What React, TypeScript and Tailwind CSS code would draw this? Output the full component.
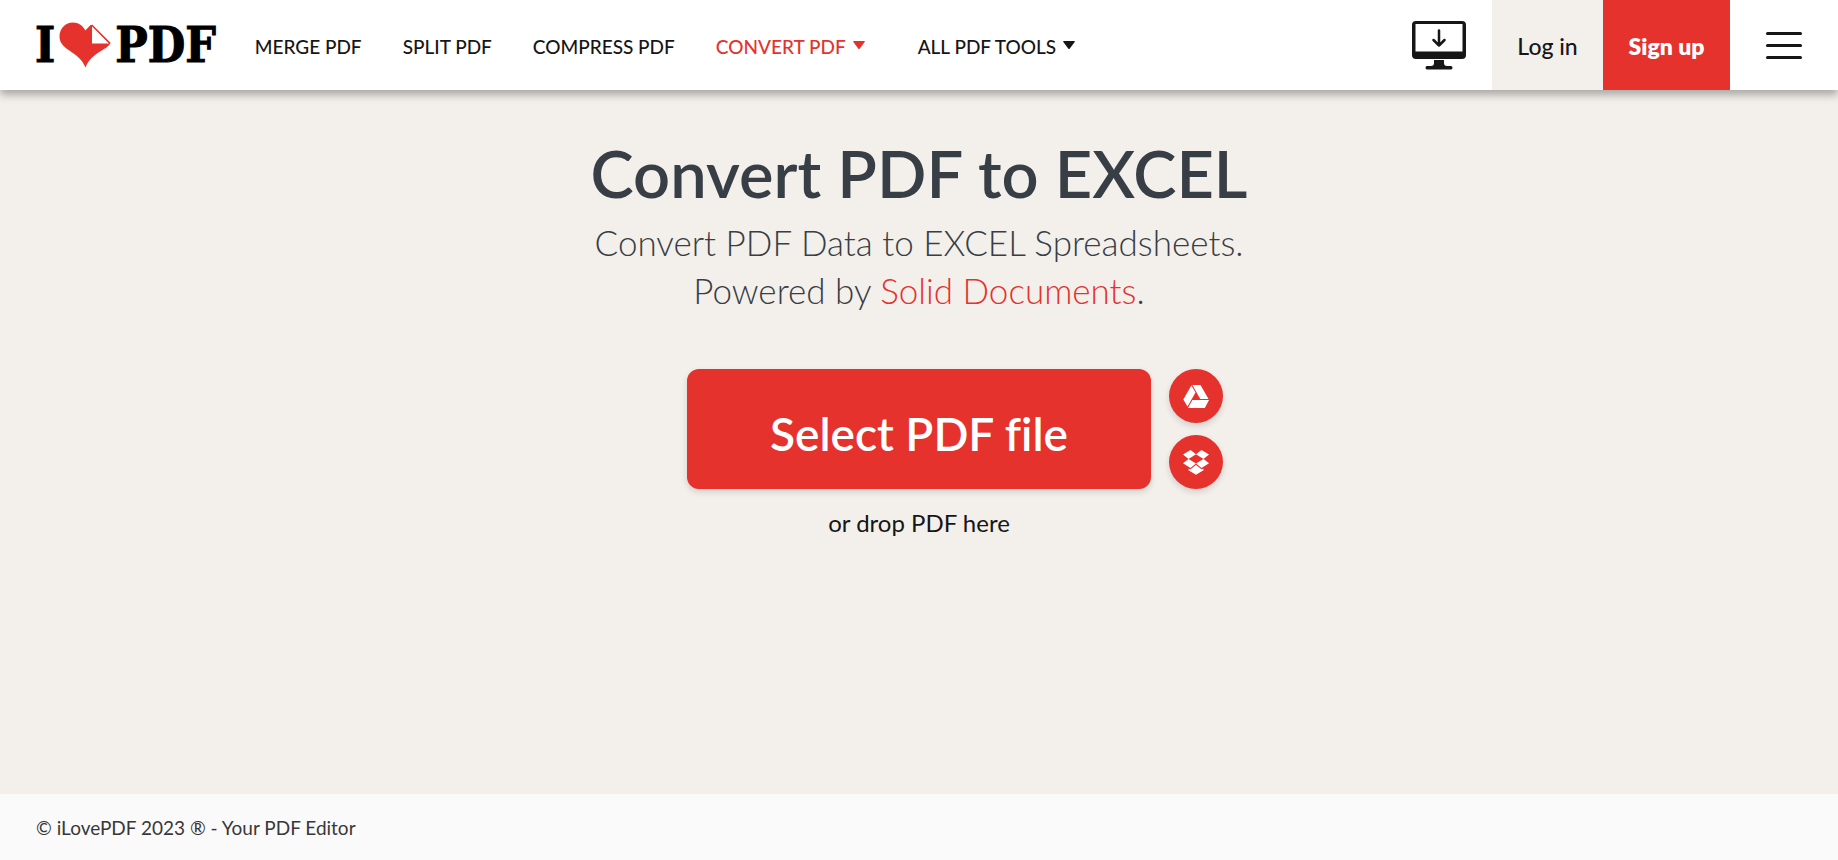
const navLink = "flex items-center gap-[7px] whitespace-nowrap text-[19px] font-medium";

function Caret() {
  return (
    <svg viewBox="0 0 12 8" className="mb-1 h-2 w-3" fill="currentColor" aria-hidden="true">
      <path d="M.8 0h10.400q1 .1.5 1L6.800 7.400q-.8 1-1.600 0L.3 1q-.5-.9.5-1z" />
    </svg>
  );
}

function Logo() {
  return (
    <a
      href="#"
      aria-label="iLovePDF"
      className="flex shrink-0 items-center font-['DejaVu_Serif_Condensed','DejaVu_Serif',serif] text-[48px] leading-none font-bold text-black [-webkit-text-stroke:1px_black]"
    >
      <span>I</span>
      <svg viewBox="0 0 52 46" className="mx-1 h-[46px] w-[52px]" aria-hidden="true">
        <path
          fill="#e5322d"
          d="M26.500 45.500C23 37.500 17.500 33.500 10 28.300 3.500 24 .5 20 .5 14.500.5 6.500 6.500.5 14 .5c5.500 0 10 3 12.300 8L31.500 3h1.800L51.500 21c-1.500 3.600-5 5-10 8.300C34 34 29.500 38 26.500 45.500z"
        />
        <path fill="#fff" d="M33 3.800v17.700h17.200z" />
        <path fill="none" stroke="#e5322d" strokeWidth="1.300" d="M32.700 3 51 21.300" />
      </svg>
      <span>PDF</span>
    </a>
  );
}

function Desktop() {
  return (
    <svg viewBox="0 0 54 49" className="h-[49px] w-[54px]" aria-hidden="true">
      <path
        fill="#161616"
        fillRule="evenodd"
        d="M4 0h46a4 4 0 0 1 4 4v30a4 4 0 0 1-4 4H4a4 4 0 0 1-4-4V4a4 4 0 0 1 4-4zM3.500 3v27.500h47V3z"
      />
      <path
        fill="#161616"
        d="M22 39h10v3q0 3 3 3h4q1.500 0 1.500 1.800T39 48.500H15q-1.500 0-1.500-1.700T15 45h4q3 0 3-3z"
      />
      <path
        fill="none"
        stroke="#161616"
        strokeWidth="2.500"
        strokeLinecap="round"
        strokeLinejoin="round"
        d="M27 9.500v15M21.500 19l5.500 5.500 5.500-5.500"
      />
    </svg>
  );
}

function Drive() {
  return (
    <svg viewBox="0 0 26 23" className="h-[23px] w-[26px]" fill="#fff" aria-hidden="true">
      <path d="M8.300.5 12.500 7.500 4.500 21.500.3 14.500z" />
      <path d="M9.300 0h8.200l8 14h-8.200z" />
      <path d="M9.400 15H26l-4.200 8H5z" />
    </svg>
  );
}

function Dropbox() {
  return (
    <svg viewBox="0 0 26 25" className="h-[25px] w-[26px]" fill="#fff" aria-hidden="true">
      <path d="M7.500 0 13 4.200 5.500 8.900 0 4.600z" />
      <path d="M18.500 0 26 4.600l-5.500 4.300L13 4.200z" />
      <path d="M0 13.200 5.500 8.900 13 13.500l-5.500 4.400z" />
      <path d="M26 13.200 20.500 8.900 13 13.500l5.500 4.400z" />
      <path d="M5.500 18.800l2 .5 5.500-4.300 5.500 4.300 2-.5v1.400L13 24.800l-7.500-4.600z" />
    </svg>
  );
}

const round =
  "flex size-[54px] items-center justify-center rounded-full bg-[#e5322d] shadow-[0_3px_6px_rgba(0,0,0,0.14)]";

export default function App() {
  return (
    <div className="flex min-h-screen flex-col bg-[#f3f0ec] font-['Lato',sans-serif] text-[#161616]">
      <header className="relative flex h-[90px] items-center bg-white pl-[35px] shadow-[0_5px_8px_rgba(0,0,0,0.3)]">
        <Logo />
        <nav className="ml-[39px] flex items-center gap-[41px] pt-1">
          <a href="#" className={navLink}>MERGE PDF</a>
          <a href="#" className={navLink}>SPLIT PDF</a>
          <a href="#" className={navLink}>COMPRESS PDF</a>
          <button type="button" className={navLink + " mr-3 text-[#e5322d]"}>
            CONVERT PDF <Caret />
          </button>
          <button type="button" className={navLink}>
            ALL PDF TOOLS <Caret />
          </button>
        </nav>
        <div className="ml-auto flex items-center self-stretch">
          <a href="#" aria-label="Desktop app" className="mr-[26px]">
            <Desktop />
          </a>
          <a
            href="#"
            className="flex w-[111px] items-center justify-center self-stretch bg-[#f3f0ec] pt-0.5 text-[23px] font-medium"
          >
            Log in
          </a>
          <a
            href="#"
            className="flex w-[127px] items-center justify-center self-stretch bg-[#e5322d] pt-0.5 text-[23px] font-extrabold text-white"
          >
            Sign up
          </a>
          <button type="button" aria-label="Menu" className="mx-9 flex flex-col gap-[9px]">
            <span className="h-[3px] w-9 rounded-full bg-[#161616]" />
            <span className="h-[3px] w-9 rounded-full bg-[#161616]" />
            <span className="h-[3px] w-9 rounded-full bg-[#161616]" />
          </button>
        </div>
      </header>

      <main className="flex flex-1 flex-col items-center pt-11">
        <h1 className="text-center text-[65px] leading-[78px] font-semibold text-[#383e45]">
          Convert PDF to EXCEL
        </h1>
        <p className="mt-1.5 text-center text-[35px] leading-[48px] font-light text-[#383e45]">
          Convert PDF Data to EXCEL Spreadsheets.
          <br />
          Powered by <a href="#" className="text-[#e5322d]">Solid Documents</a>.
        </p>
        <div className="mt-[55px] grid w-full grid-cols-[1fr_auto_1fr] gap-x-[18px]">
          <button
            type="button"
            className="col-start-2 h-[120px] w-[464px] rounded-xl bg-[#e5322d] pt-2 text-[46px] font-semibold text-white shadow-[0_3px_6px_rgba(0,0,0,0.14)] [font-variant-ligatures:no-common-ligatures]"
          >
            Select PDF file
          </button>
          <div className="flex flex-col gap-3">
            <button type="button" aria-label="Select from Google Drive" className={round}>
              <Drive />
            </button>
            <button type="button" aria-label="Select from Dropbox" className={round}>
              <Dropbox />
            </button>
          </div>
        </div>
        <p className="mt-[18px] text-2xl">or drop PDF here</p>
      </main>

      <footer className="flex h-[66px] items-center bg-[#fafafa] px-9 pt-0.5 text-[19px] text-[#383838]">
        © iLovePDF 2023 ® - Your PDF Editor
      </footer>
    </div>
  );
}
